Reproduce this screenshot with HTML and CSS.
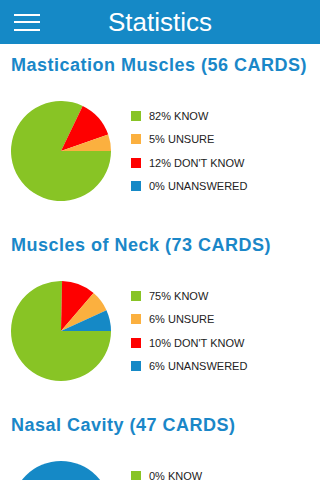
FILE: index.html
```html
<!DOCTYPE html>
<html lang="en">
<head>
<meta charset="UTF-8">
<title>Statistics</title>
<meta name="viewport" content="width=device-width, initial-scale=1.0">
<link rel="stylesheet" href="styles.css">
</head>
<body>
<!-- top bar -->
<div class="topbar">
  <div class="menu-btn">
    <span></span><span></span><span></span>
  </div>
  <h1>Statistics</h1>
  <div></div>
</div>

<div class="deck">
  <h2>Mastication Muscles (56 CARDS)</h2>
  <div class="chart-row">
    <svg class="pie" viewBox="0 0 100 100">
      <path class="know" d="M50 50 L100 50 A50 50 0 1 1 71.70 4.95 Z"/>
      <path class="dont" d="M50 50 L71.70 4.95 A50 50 0 0 1 97.20 33.49 Z"/>
      <path class="unsure" d="M50 50 L97.20 33.49 A50 50 0 0 1 100 50 Z"/>
    </svg>
    <ul class="legend">
      <li><i class="sw know"></i>82% KNOW</li>
      <li><i class="sw unsure"></i>5% UNSURE</li>
      <li><i class="sw dont"></i>12% DON'T KNOW</li>
      <li><i class="sw none"></i>0% UNANSWERED</li>
    </ul>
  </div>
</div>

<div class="deck">
  <h2>Muscles of Neck (73 CARDS)</h2>
  <div class="chart-row">
    <svg class="pie" viewBox="0 0 100 100">
      <path class="know" d="M50 50 L100 50 A50 50 0 1 1 51.08 0.01 Z"/>
      <path class="dont" d="M50 50 L51.08 0.01 A50 50 0 0 1 82.60 12.08 Z"/>
      <path class="unsure" d="M50 50 L82.60 12.08 A50 50 0 0 1 95.44 29.14 Z"/>
      <path class="none" d="M50 50 L95.44 29.14 A50 50 0 0 1 100 50 Z"/>
    </svg>
    <ul class="legend">
      <li><i class="sw know"></i>75% KNOW</li>
      <li><i class="sw unsure"></i>6% UNSURE</li>
      <li><i class="sw dont"></i>10% DON'T KNOW</li>
      <li><i class="sw none"></i>6% UNANSWERED</li>
    </ul>
  </div>
</div>

<div class="deck">
  <h2>Nasal Cavity (47 CARDS)</h2>
  <div class="chart-row">
    <svg class="pie" viewBox="0 0 100 100">
      <circle class="none" cx="50" cy="50" r="50"/>
    </svg>
    <ul class="legend">
      <li><i class="sw know"></i>0% KNOW</li>
      <li><i class="sw unsure"></i>0% UNSURE</li>
      <li><i class="sw dont"></i>0% DON'T KNOW</li>
      <li><i class="sw none"></i>100% UNANSWERED</li>
    </ul>
  </div>
</div>
</body>
</html>
```

FILE: styles.css
```css
html, body {
margin: 0;
padding: 0;
background: #fff;
}
body {
font-family: "Liberation Sans", Arial, sans-serif;
color: #222;
}

/* 頂部欄 */
.topbar {
height: 44px;
background: #1589c6;
display: grid;
grid-template-columns: 54px 1fr 54px;
align-items: center;
}
.topbar h1 {
margin: 0;
color: #fff;
font-size: 26px;
font-weight: 400;
line-height: 44px;
text-align: center;
}
.menu-btn {
padding-left: 14px;
display: flex;
flex-direction: column;
gap: 5.5px;
}
.menu-btn span {
display: block;
width: 26px;
height: 2px;
background: #fff;
}

/* 每個卡組 */
.deck {
height: 180px;
padding: 10px 0 0 11px;
box-sizing: border-box;
}
.deck h2 {
margin: 0 0 25px 0;
color: #1a87c8;
font-size: 18px;
line-height: 22px;
font-weight: 700;
letter-spacing: 0.5px;
white-space: nowrap;
}
.chart-row {
display: flex;
align-items: center;
gap: 20px;
}
.pie {
width: 100px;
height: 100px;
flex: none;
}
.legend {
list-style: none;
margin: 0;
padding: 0;
}
.legend li {
height: 23.3px;
display: flex;
align-items: center;
gap: 8px;
font-size: 11px;
}
.sw {
width: 10px;
height: 10px;
flex: none;
}

.know { fill: #88c425; background: #88c425; }
.unsure { fill: #fbb03f; background: #fbb03f; }
.dont { fill: #fe0000; background: #fe0000; }
.none { fill: #1589c6; background: #1589c6; }
```
